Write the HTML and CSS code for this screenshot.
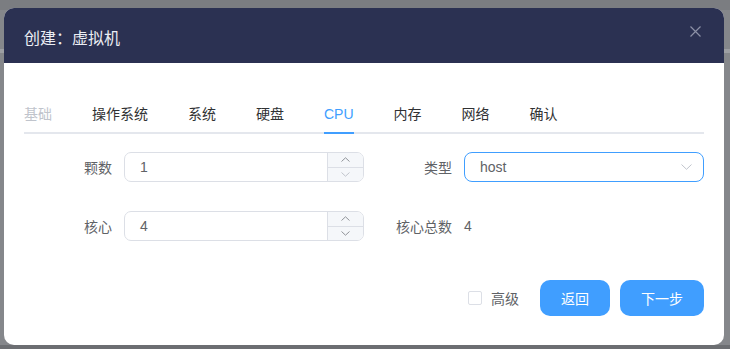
FILE: index.html
```html
<!DOCTYPE html>
<html lang="zh-CN">
<head>
  <meta charset="UTF-8">
  <meta name="viewport" content="width=device-width, initial-scale=1.0">
  <title>创建：虚拟机</title>
  <link rel="stylesheet" href="styles.css">
</head>
<body>
  <div class="dialog">
    <div class="dialog-header">
      <span class="dialog-title">创建：虚拟机</span>
      <svg class="dialog-close" width="11" height="11" viewBox="0 0 11 11">
        <path d="M0.5 0.5 L10.5 10.5 M10.5 0.5 L0.5 10.5" stroke="#8c90a6" stroke-width="1.2" fill="none"/>
      </svg>
    </div>
    <div class="dialog-body">
      <div class="tabs">
        <div class="tab disabled"><span>基础</span></div>
        <div class="tab"><span>操作系统</span></div>
        <div class="tab"><span>系统</span></div>
        <div class="tab"><span>硬盘</span></div>
        <div class="tab active"><span>CPU</span></div>
        <div class="tab"><span>内存</span></div>
        <div class="tab"><span>网络</span></div>
        <div class="tab"><span>确认</span></div>
      </div>

      <div class="form">
        <div class="field">
          <label class="field-label">颗数</label>
          <div class="number-input">
            <span class="number-value">1</span>
            <div class="number-controls">
              <span class="ctrl">
                <svg width="9" height="5" viewBox="0 0 9 5"><path d="M0.5 4.5 L4.5 0.8 L8.5 4.5" stroke="#909399" fill="none"/></svg>
              </span>
              <span class="ctrl ctrl-down">
                <svg width="9" height="5" viewBox="0 0 9 5"><path d="M0.5 0.5 L4.5 4.2 L8.5 0.5" stroke="#c0c4cc" fill="none"/></svg>
              </span>
            </div>
          </div>
        </div>
        <div class="field">
          <label class="field-label">类型</label>
          <div class="select">
            <span>host</span>
            <svg width="11" height="6" viewBox="0 0 11 6"><path d="M0.5 0.5 L5.5 5.3 L10.5 0.5" stroke="#c0c4cc" fill="none"/></svg>
          </div>
        </div>
        <div class="field">
          <label class="field-label">核心</label>
          <div class="number-input">
            <span class="number-value">4</span>
            <div class="number-controls">
              <span class="ctrl">
                <svg width="9" height="5" viewBox="0 0 9 5"><path d="M0.5 4.5 L4.5 0.8 L8.5 4.5" stroke="#909399" fill="none"/></svg>
              </span>
              <span class="ctrl ctrl-down">
                <svg width="9" height="5" viewBox="0 0 9 5"><path d="M0.5 0.5 L4.5 4.2 L8.5 0.5" stroke="#909399" fill="none"/></svg>
              </span>
            </div>
          </div>
        </div>
        <div class="field">
          <label class="field-label">核心总数</label>
          <span class="field-text">4</span>
        </div>
      </div>

      <div class="footer">
        <label class="checkbox"><span class="checkbox-box"></span>高级</label>
        <button class="btn">返回</button>
        <button class="btn">下一步</button>
      </div>
    </div>
  </div>
</body>
</html>
```

FILE: styles.css
```css
body {
  margin: 0;
  font-family: "Liberation Sans", "Noto Sans CJK SC", sans-serif;
  background: linear-gradient(#7b7d81 0, #7b7d81 10px, #85878b 10px, #85878b 49px, #9d9fa3 49px, #9d9fa3 53px, #85878b 53px, #85878b 345px, #6c6e72 345px);
  height: 349px;
  overflow: hidden;
}
.dialog {
  margin: 8px 0 0 4px;
  width: 720px;
  border-radius: 10px;
  overflow: hidden;
  background-color: white;
}
.dialog-header {
  height: 55px;
  background-color: #2b3152;
  display: flex;
  align-items: center;
  justify-content: space-between;
  padding: 0 23px 0 20px;
}
.dialog-title {
  font-size: 16px;
  color: #eceef4;
  margin-top: 3px;
}
.dialog-close {
  margin-top: -8px;
}
.dialog-body {
  padding: 33px 20px 29px;
}
.tabs {
  display: flex;
  border-bottom: 2px solid #e4e7ed;
}
.tab {
  padding: 0 20px;
  margin-bottom: -2px;
  font-size: 14px;
  color: #303133;
}
.tab:first-child {
  padding-left: 0;
}
.tab span {
  display: block;
  line-height: 36px;
  border-bottom: 2px solid transparent;
}
.tab.disabled {
  color: #c0c4cc;
}
.tab.active {
  color: #409eff;
}
.tab.active span {
  border-bottom-color: #409eff;
}
.form {
  display: grid;
  grid-template-columns: 340px 340px;
  grid-auto-rows: 30px;
  row-gap: 29px;
  margin-top: 18px;
}
.field {
  display: flex;
  align-items: center;
  font-size: 14px;
  color: #606266;
}
.field-label {
  width: 100px;
  padding-right: 12px;
  box-sizing: border-box;
  text-align: right;
}
.field-text {
  color: #606266;
}
.number-input {
  width: 240px;
  height: 30px;
  box-sizing: border-box;
  border: 1px solid #dcdfe6;
  border-radius: 7px;
  display: flex;
  overflow: hidden;
}
.number-value {
  flex: 1;
  padding-left: 15px;
  line-height: 28px;
  color: #606266;
}
.number-controls {
  width: 35px;
  border-left: 1px solid #dcdfe6;
  background-color: #f5f7fa;
  display: flex;
  flex-direction: column;
}
.ctrl {
  flex: 1;
  display: flex;
  align-items: center;
  justify-content: center;
}
.ctrl-down {
  border-top: 1px solid #dcdfe6;
}
.select {
  width: 240px;
  height: 30px;
  box-sizing: border-box;
  border: 1px solid #409eff;
  border-radius: 8px;
  display: flex;
  align-items: center;
  justify-content: space-between;
  padding: 0 11px 0 15px;
  color: #606266;
}
.footer {
  display: flex;
  justify-content: flex-end;
  align-items: center;
  gap: 10px;
  margin-top: 39px;
}
.checkbox {
  display: flex;
  align-items: center;
  gap: 9px;
  font-size: 14px;
  color: #606266;
  margin-right: 11px;
}
.checkbox-box {
  width: 14px;
  height: 14px;
  box-sizing: border-box;
  border: 1px solid #dcdfe6;
  border-radius: 2px;
  background-color: white;
}
.btn {
  height: 36px;
  padding: 0 21px;
  font-family: inherit;
  font-size: 14px;
  color: white;
  background-color: #409eff;
  border: none;
  border-radius: 10px;
  cursor: pointer;
}
```
